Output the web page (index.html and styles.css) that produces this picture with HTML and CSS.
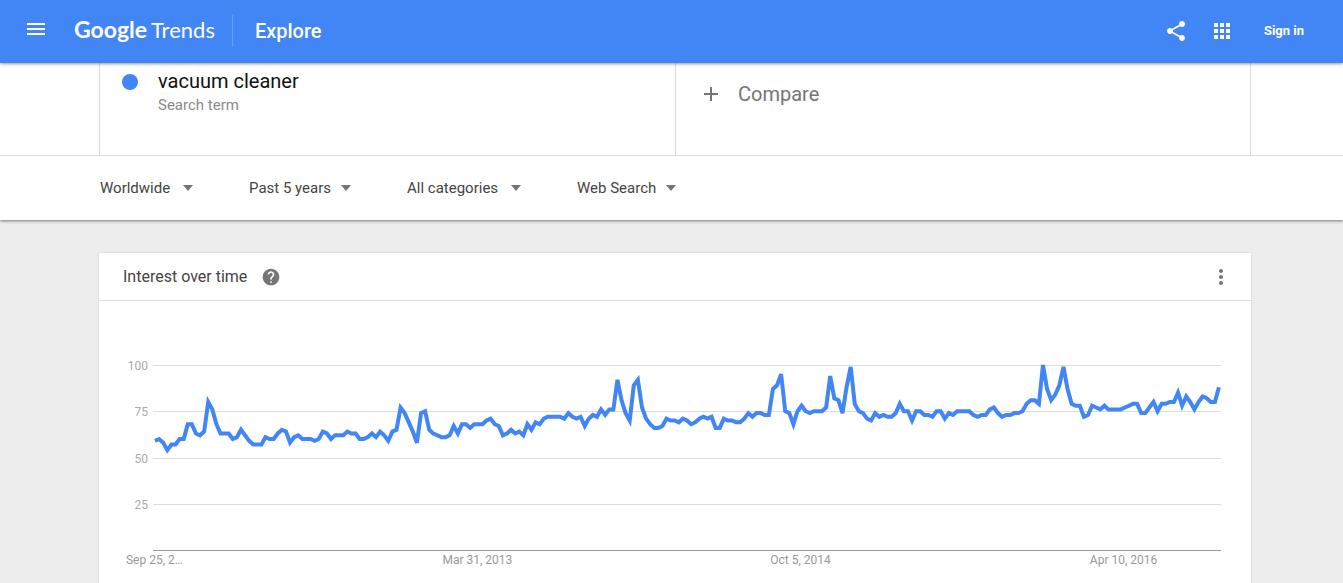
FILE: index.html
```html
<!DOCTYPE html>
<html lang="en">
<head>
<meta charset="utf-8">
<meta name="viewport" content="width=device-width, initial-scale=1">
<title>vacuum cleaner - Explore - Google Trends</title>
<link rel="stylesheet" href="styles.css">
</head>
<body>
<header class="topbar">
  <button class="icon-button menu" aria-label="Main menu">
    <svg viewBox="0 0 24 24"><path d="M3 18h18v-2H3v2zm0-5h18v-2H3v2zm0-7v2h18V6H3z"/></svg>
  </button>
  <a class="logo" href="#"><span class="logo-brand">Google</span><span class="logo-product">Trends</span></a>
  <a class="section-name" href="#">Explore</a>
  <div class="actions">
    <button class="icon-button" aria-label="Share">
      <svg viewBox="0 0 24 24"><path d="M18 16.08c-.76 0-1.44.3-1.96.77L8.91 12.7c.05-.23.09-.46.09-.7s-.04-.47-.09-.7l7.05-4.11c.54.5 1.25.81 2.04.81 1.66 0 3-1.34 3-3s-1.34-3-3-3-3 1.34-3 3c0 .24.04.47.09.7L8.04 9.81C7.5 9.31 6.79 9 6 9c-1.66 0-3 1.34-3 3s1.34 3 3 3c.79 0 1.5-.31 2.04-.81l7.12 4.16c-.05.21-.08.43-.08.65 0 1.61 1.31 2.92 2.92 2.92s2.92-1.31 2.92-2.92-1.31-2.92-2.92-2.92z"/></svg>
    </button>
    <button class="icon-button" aria-label="Google apps">
      <svg viewBox="0 0 24 24"><path d="M4 8h4V4H4v4zm6 12h4v-4h-4v4zm-6 0h4v-4H4v4zm0-6h4v-4H4v4zm6 0h4v-4h-4v4zm6-10v4h4V4h-4zm-6 4h4V4h-4v4zm6 6h4v-4h-4v4zm0 6h4v-4h-4v4z"/></svg>
    </button>
    <a class="sign-in" href="#">Sign in</a>
  </div>
</header>

<section class="search">
  <div class="terms-row">
    <div class="terms">
      <div class="term">
        <span class="dot"></span>
        <div>
          <div class="term-name">vacuum cleaner</div>
          <div class="term-kind">Search term</div>
        </div>
      </div>
      <button class="compare">
        <svg class="plus" viewBox="0 0 24 24"><path d="M19 13h-6v6h-2v-6H5v-2h6V5h2v6h6v2z"/></svg>
        Compare
      </button>
    </div>
  </div>
  <div class="filters">
    <div class="filter filter-region">
      <select aria-label="Region"><option>Worldwide</option></select>
      <svg class="caret" viewBox="0 0 10 6"><path d="M0 0h10L5 6z"/></svg>
    </div>
    <div class="filter filter-period">
      <select aria-label="Time range"><option>Past 5 years</option></select>
      <svg class="caret" viewBox="0 0 10 6"><path d="M0 0h10L5 6z"/></svg>
    </div>
    <div class="filter filter-category">
      <select aria-label="Category"><option>All categories</option></select>
      <svg class="caret" viewBox="0 0 10 6"><path d="M0 0h10L5 6z"/></svg>
    </div>
    <div class="filter filter-source">
      <select aria-label="Search type"><option>Web Search</option></select>
      <svg class="caret" viewBox="0 0 10 6"><path d="M0 0h10L5 6z"/></svg>
    </div>
  </div>
</section>

<main class="content">
  <article class="card">
    <div class="card-head">
      <h2>Interest over time</h2>
      <button class="help" aria-label="Help">
        <svg viewBox="0 0 24 24"><path d="M12 2C6.48 2 2 6.48 2 12s4.48 10 10 10 10-4.48 10-10S17.52 2 12 2zm1 17h-2v-2h2v2zm2.07-7.75l-.9.92C13.45 12.9 13 13.5 13 15h-2v-.5c0-1.1.45-2.1 1.17-2.83l1.24-1.26c.37-.36.59-.86.59-1.41 0-1.1-.9-2-2-2s-2 .9-2 2H8c0-2.21 1.79-4 4-4s4 1.79 4 4c0 .88-.36 1.68-.93 2.25z"/></svg>
      </button>
      <button class="more" aria-label="More options">
        <svg viewBox="0 0 24 24"><path d="M12 8c1.1 0 2-.9 2-2s-.9-2-2-2-2 .9-2 2 .9 2 2 2zm0 2c-1.1 0-2 .9-2 2s.9 2 2 2 2-.9 2-2-.9-2-2-2zm0 6c-1.1 0-2 .9-2 2s.9 2 2 2 2-.9 2-2-.9-2-2-2z"/></svg>
      </button>
    </div>
    <div class="chart">
      <div class="y-axis"><span>100</span><span>75</span><span>50</span><span>25</span></div>
      <div class="plot">
        <div class="grid-lines"><i></i><i></i><i></i><i></i></div>
        <svg class="series" viewBox="0 0 261 100" preserveAspectRatio="none" role="img" aria-label="Interest over time for vacuum cleaner"><polyline id="line"/></svg>
      </div>
      <div class="x-axis"><span>Sep 25, 2…</span><span>Mar 31, 2013</span><span>Oct 5, 2014</span><span>Apr 10, 2016</span></div>
    </div>
  </article>
</main>
<script src="chart.js"></script>
</body>
</html>
```
FILE: styles.css
```css
* { box-sizing: border-box; }

body {
  margin: 0;
  min-height: 100vh;
  display: flex;
  flex-direction: column;
  background: #ededed;
  color: #444;
  font-family: Roboto, "Liberation Sans", sans-serif;
}

a { color: inherit; text-decoration: none; }

button {
  border: 0;
  padding: 0;
  background: none;
  color: inherit;
  font: inherit;
  cursor: pointer;
}

svg { display: block; fill: currentColor; }

/* Top bar */
.topbar {
  position: relative;
  z-index: 1;
  display: flex;
  align-items: center;
  height: 63px;
  padding: 0 39px 2px 24px;
  background: #4285f4;
  color: #fff;
  box-shadow: 0 1px 3px rgba(0, 0, 0, .4);
}

.icon-button svg { width: 24px; height: 24px; }
.menu { padding-bottom: 4px; }

.logo {
  display: flex;
  align-items: baseline;
  gap: 4px;
  margin-left: 26px;
  padding-bottom: 2px;
  font-family: Lato, sans-serif;
  line-height: 32px;
}
.logo-brand { font-size: 23px; font-weight: 700; }
.logo-product { font-size: 22px; }

.section-name {
  margin-left: 17px;
  padding-left: 22px;
  border-left: 1px solid #689df6;
  font-size: 20px;
  font-weight: 500;
  line-height: 32px;
}

.actions {
  display: flex;
  align-items: center;
  gap: 22px;
  margin-left: auto;
}
.sign-in {
  margin-left: 8px;
  font-size: 13px;
  font-weight: 700;
}

/* Search terms and filters */
.search {
  background: #fff;
  box-shadow: 0 1px 3px rgba(0, 0, 0, .5);
}
.terms-row {
  padding: 0 92px 0 99px;
  border-bottom: 1px solid #dcdcdc;
}
.terms {
  display: grid;
  grid-template-columns: 1fr 1fr;
  height: 92px;
  border: solid #dcdcdc;
  border-width: 0 1px;
}
.term {
  display: flex;
  gap: 20px;
  padding: 6px 22px;
}
.dot {
  width: 16px;
  height: 16px;
  margin-top: 5px;
  border-radius: 50%;
  background: #4285f4;
}
.term-name { color: #111; font-size: 20px; line-height: 24px; }
.term-kind { color: #8a8a8a; font-size: 15px; line-height: 24px; }

.compare {
  display: flex;
  align-items: center;
  gap: 15px;
  padding: 0 23px 30px;
  border-left: 1px solid #dcdcdc;
  color: #757575;
  font-size: 20px;
}
.plus { width: 24px; height: 24px; }

.filters {
  display: flex;
  align-items: center;
  gap: 56px;
  height: 64px;
  padding: 0 100px;
}
.filter { position: relative; }
.filter select {
  width: 100%;
  border: 0;
  padding: 0;
  appearance: none;
  background: none;
  color: #444;
  font: 15px/24px Roboto, sans-serif;
}
.caret {
  position: absolute;
  top: 9px;
  right: 0;
  width: 10px;
  height: 6px;
  color: #757575;
  pointer-events: none;
}
.filter-region { width: 93px; }
.filter-period { width: 102px; }
.filter-category { width: 114px; }
.filter-source { width: 99px; }

/* Chart card */
.content {
  flex: 1;
  display: flex;
  padding: 33px 92px 0 99px;
}
.card {
  flex: 1;
  background: #fff;
  box-shadow: 0 0 2px rgba(0, 0, 0, .15);
}
.card-head {
  display: flex;
  align-items: center;
  height: 48px;
  padding: 0 18px 0 24px;
  border-bottom: 1px solid #dcdcdc;
}
.card-head h2 { margin: 0; font-size: 16px; font-weight: 400; }
.card-head button { color: #757575; }
.help { margin-left: 14px; }
.help svg { width: 20px; height: 20px; }
.more { margin-left: auto; }
.more svg { width: 24px; height: 24px; }

.chart {
  display: grid;
  grid-template-columns: 24px 1fr;
  grid-template-rows: 185px 20px;
  column-gap: 5px;
  padding: 64px 30px 0 25px;
  color: #aaa;
  font-size: 12px;
}
.y-axis {
  display: grid;
  grid-template-rows: repeat(4, 1fr);
  line-height: 16px;
  text-align: right;
}
.y-axis span { margin-top: -7px; }

.plot { position: relative; }
.grid-lines {
  display: grid;
  grid-template-rows: repeat(4, 1fr);
  height: 186px;
  border-bottom: 1px solid #999;
}
.grid-lines i { border-top: 1px solid #dcdcdc; }
.series {
  position: absolute;
  inset: 0;
  width: 100%;
  height: 100%;
  overflow: visible;
  fill: none;
  stroke: #4285f4;
  stroke-width: 4;
}
.series polyline { vector-effect: non-scaling-stroke; }

/* Each label is centred in a column 79 weeks wide */
.x-axis {
  grid-column: 2;
  display: grid;
  grid-template-columns: repeat(4, 1fr);
  width: 121%;
  margin-left: -15%;
  color: #999;
  line-height: 20px;
  text-align: center;
}
```
FILE: chart.js
```js
// Weekly search interest, September 2011 to September 2016.
const values = [
  59, 60, 58, 54, 57, 57, 60, 60, 68, 68, 63, 62, 64, 80, 76, 68, 63, 63, 63, 60,
  61, 65, 62, 59, 57, 57, 57, 61, 60, 60, 63, 65, 64, 58, 61, 62, 60, 60, 60, 59,
  60, 64, 63, 60, 62, 62, 62, 64, 63, 63, 60, 60, 61, 63, 61, 64, 62, 59, 64, 65,
  77, 74, 69, 64, 58, 74, 75, 65, 63, 62, 61, 61, 62, 67, 63, 68, 68, 66, 68, 68,
  68, 70, 71, 68, 67, 62, 63, 65, 63, 64, 62, 68, 65, 69, 68, 71, 72, 72, 72, 72,
  71, 74, 72, 71, 72, 67, 71, 73, 72, 76, 73, 76, 76, 92, 81, 74, 70, 89, 92, 77,
  71, 68, 66, 66, 67, 71, 70, 70, 69, 71, 70, 68, 69, 71, 72, 71, 72, 66, 66, 71,
  70, 70, 69, 69, 71, 74, 72, 74, 74, 73, 73, 87, 89, 95, 75, 74, 68, 75, 78, 75,
  74, 75, 75, 75, 77, 94, 82, 81, 74, 88, 99, 79, 75, 74, 71, 70, 74, 72, 73, 72,
  72, 74, 79, 75, 75, 70, 75, 75, 73, 73, 72, 75, 75, 71, 74, 73, 75, 75, 75, 75,
  73, 72, 73, 73, 76, 77, 74, 72, 73, 73, 74, 74, 75, 79, 81, 81, 79, 100, 87, 81,
  84, 89, 99, 87, 79, 78, 78, 72, 73, 78, 77, 76, 78, 76, 76, 76, 76, 77, 78, 79,
  79, 74, 74, 77, 80, 75, 79, 79, 80, 80, 85, 78, 83, 80, 76, 80, 83, 82, 80, 80,
  88
];

document.getElementById("line").setAttribute(
  "points",
  values.map((value, week) => `${week + 0.5},${100 - value}`).join(" ")
);
```
